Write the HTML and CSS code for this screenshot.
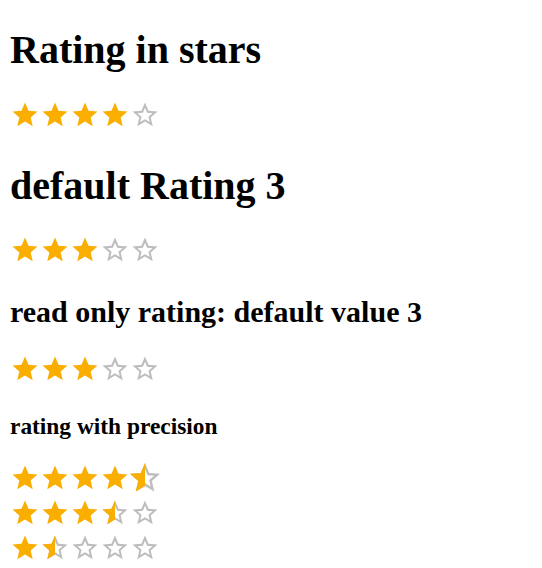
FILE: index.html
```html
<!DOCTYPE html>
<html lang="en">
<head>
<meta charset="utf-8">
<title>Rating</title>
<link rel="stylesheet" href="styles.css">
</head>
<body>
<svg class="defs" width="0" height="0" aria-hidden="true">
  <defs>
    <path id="star-full" d="M12 17.27L18.18 21l-1.64-7.03L22 9.24l-7.19-.61L12 2 9.19 8.63 2 9.24l5.46 4.73L5.82 21z"/>
    <path id="star-empty" d="M22 9.24l-7.19-.62L12 2 9.19 8.63 2 9.24l5.46 4.73L5.82 21 12 17.27 18.18 21l-1.63-7.03L22 9.24zM12 15.4l-3.76 2.27 1-4.28-3.32-2.88 4.38-.38L12 6.1l1.71 4.04 4.38.38-3.32 2.88 1 4.28L12 15.4z"/>
  </defs>
</svg>

<h1 class="title first">Rating in stars</h1>
<div class="rating-row">
  <span class="rating">
    <span class="star filled"><svg viewBox="0 0 24 24"><use href="#star-full"/></svg></span>
    <span class="star filled"><svg viewBox="0 0 24 24"><use href="#star-full"/></svg></span>
    <span class="star filled"><svg viewBox="0 0 24 24"><use href="#star-full"/></svg></span>
    <span class="star filled"><svg viewBox="0 0 24 24"><use href="#star-full"/></svg></span>
    <span class="star empty"><svg viewBox="0 0 24 24"><use href="#star-empty"/></svg></span>
  </span>
</div>

<h1 class="title">default Rating 3</h1>
<div class="rating-row">
  <span class="rating">
    <span class="star filled"><svg viewBox="0 0 24 24"><use href="#star-full"/></svg></span>
    <span class="star filled"><svg viewBox="0 0 24 24"><use href="#star-full"/></svg></span>
    <span class="star filled"><svg viewBox="0 0 24 24"><use href="#star-full"/></svg></span>
    <span class="star empty"><svg viewBox="0 0 24 24"><use href="#star-empty"/></svg></span>
    <span class="star empty"><svg viewBox="0 0 24 24"><use href="#star-empty"/></svg></span>
  </span>
</div>

<h2 class="subtitle">read only rating: default value 3</h2>
<div class="rating-row">
  <span class="rating">
    <span class="star filled"><svg viewBox="0 0 24 24"><use href="#star-full"/></svg></span>
    <span class="star filled"><svg viewBox="0 0 24 24"><use href="#star-full"/></svg></span>
    <span class="star filled"><svg viewBox="0 0 24 24"><use href="#star-full"/></svg></span>
    <span class="star empty"><svg viewBox="0 0 24 24"><use href="#star-empty"/></svg></span>
    <span class="star empty"><svg viewBox="0 0 24 24"><use href="#star-empty"/></svg></span>
  </span>
</div>

<h3 class="section">rating with precision</h3>
<div class="rating-row">
  <span class="rating">
    <span class="star filled"><svg viewBox="0 0 24 24"><use href="#star-full"/></svg></span>
    <span class="star filled"><svg viewBox="0 0 24 24"><use href="#star-full"/></svg></span>
    <span class="star filled"><svg viewBox="0 0 24 24"><use href="#star-full"/></svg></span>
    <span class="star filled"><svg viewBox="0 0 24 24"><use href="#star-full"/></svg></span>
    <span class="star decimal active">
      <span class="star empty"><svg viewBox="0 0 24 24"><use href="#star-empty"/></svg></span>
      <span class="half filled"><svg viewBox="0 0 24 24"><use href="#star-full"/></svg></span>
    </span>
  </span>
</div>
<div class="rating-row">
  <span class="rating">
    <span class="star filled"><svg viewBox="0 0 24 24"><use href="#star-full"/></svg></span>
    <span class="star filled"><svg viewBox="0 0 24 24"><use href="#star-full"/></svg></span>
    <span class="star filled"><svg viewBox="0 0 24 24"><use href="#star-full"/></svg></span>
    <span class="star decimal">
      <span class="star empty"><svg viewBox="0 0 24 24"><use href="#star-empty"/></svg></span>
      <span class="half filled"><svg viewBox="0 0 24 24"><use href="#star-full"/></svg></span>
    </span>
    <span class="star empty"><svg viewBox="0 0 24 24"><use href="#star-empty"/></svg></span>
  </span>
</div>
<div class="rating-row">
  <span class="rating">
    <span class="star filled"><svg viewBox="0 0 24 24"><use href="#star-full"/></svg></span>
    <span class="star decimal">
      <span class="star empty"><svg viewBox="0 0 24 24"><use href="#star-empty"/></svg></span>
      <span class="half filled"><svg viewBox="0 0 24 24"><use href="#star-full"/></svg></span>
    </span>
    <span class="star empty"><svg viewBox="0 0 24 24"><use href="#star-empty"/></svg></span>
    <span class="star empty"><svg viewBox="0 0 24 24"><use href="#star-empty"/></svg></span>
    <span class="star empty"><svg viewBox="0 0 24 24"><use href="#star-empty"/></svg></span>
  </span>
</div>
</body>
</html>
```

FILE: styles.css
```css
html {
  font-size: 20px;
}

body {
  margin: 10px;
  font-family: "Liberation Serif", "Times New Roman", serif;
  font-size: 20px;
  color: #000;
  background: #fff;
}

.defs {
  position: absolute;
  width: 0;
  height: 0;
  overflow: hidden;
}

.title {
  font-size: 2em;
  font-weight: bold;
  margin: 0.67em 0;
}

.title.first {
  margin-top: 16px;
}

.subtitle {
  font-size: 1.5em;
  font-weight: bold;
  margin: 0.83em 0;
}

.section {
  font-size: 1.17em;
  font-weight: bold;
  margin: 1em 0;
}

.rating {
  display: inline-flex;
  position: relative;
  font-size: 1.5rem;
  color: #faaf00;
  text-align: left;
}

.star {
  display: flex;
}

.star svg,
.half svg {
  display: inline-block;
  width: 1em;
  height: 1em;
  flex-shrink: 0;
  fill: currentColor;
}

.filled {
  color: #faaf00;
}

.empty {
  color: rgba(0, 0, 0, 0.26);
}

.decimal {
  position: relative;
}

.half {
  position: absolute;
  top: 0;
  left: 0;
  width: 50%;
  overflow: hidden;
  display: flex;
}

.active {
  transform: scale(1.2);
}
```
